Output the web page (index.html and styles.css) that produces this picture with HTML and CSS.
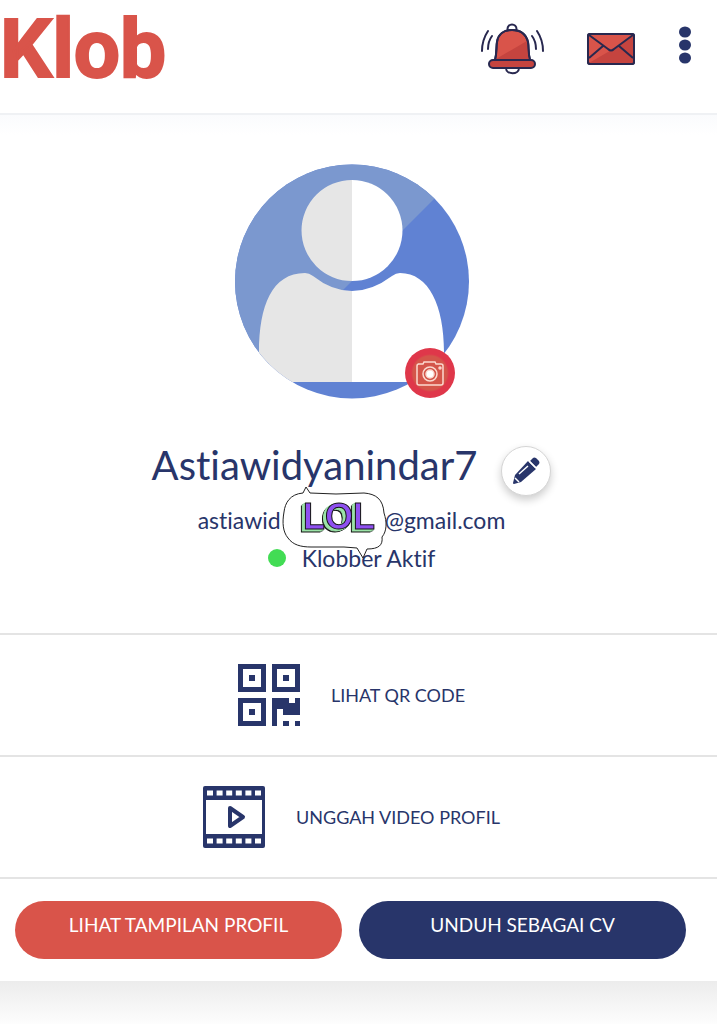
FILE: index.html
```html
<!DOCTYPE html>
<html lang="id">
<head>
  <meta charset="UTF-8" />
  <meta name="viewport" content="width=device-width, initial-scale=1.0"/>
  <title>Klob - Profil</title>
  <link rel="stylesheet" href="styles.css">
</head>
<body>
  <header class="topbar">
    <a href="#" class="logo">Klob</a>
    <nav class="topbar-nav">
      <a href="#" class="nav-bell" aria-label="Notifikasi">
        <svg width="66" height="54" viewBox="0 0 66 54" fill="none" stroke="#28284f" stroke-width="2" stroke-linecap="round" stroke-linejoin="round">
          <circle cx="32" cy="7" r="4.5"/>
          <path d="M26 46c0 7 13 7 13 0"/>
          <path d="M15 38c2-7 1-13 2-18C18 12 24 8 32 8s14 4 16 12c1 6 0 11 2 18z" fill="#d9544a"/>
          <path d="M16 37l31-18c1 7 0 13 2 18z" fill="#c5443f" stroke="none"/>
          <path d="M14 38h37a4 4 0 0 1 0 8H13a4 4 0 0 1 0-8h30" fill="#c5443f"/>
          <path d="M15 38c2-7 1-13 2-18C18 12 24 8 32 8s14 4 16 12c1 6 0 11 2 18"/>
          <path d="M8 9c-4 6-6 12-6 20M12 14c-3 4-4 8-4 13M57 9c4 6 6 12 6 20M52 14c3 4 4 8 4 13"/>
        </svg>
      </a>
      <a href="#" class="nav-mail" aria-label="Pesan">
        <svg width="50" height="34" viewBox="0 0 50 34" fill="none" stroke="#28284f" stroke-width="2" stroke-linejoin="round">
          <rect x="2" y="2" width="46" height="30" rx="2" fill="#d9544a"/>
          <path d="M3 31L34 13 47 4v27z" fill="#c5443f" stroke="none"/>
          <path d="M3 3h44L28 17q-3 3-6 0z" fill="#d9544a" stroke="none"/>
          <rect x="2" y="2" width="46" height="30" rx="2"/>
          <path d="M3 3l19 14q3 3 6 0L47 3M3 26l14-12M47 26L33 14"/>
        </svg>
      </a>
      <button class="nav-more" aria-label="Menu">
        <svg width="14" height="38" viewBox="0 0 14 38" fill="#28356a">
          <ellipse cx="7" cy="6" rx="6" ry="5.500"/>
          <ellipse cx="7" cy="19" rx="6" ry="5.500"/>
          <ellipse cx="7" cy="32" rx="6" ry="5.500"/>
        </svg>
      </button>
    </nav>
  </header>

  <main class="card">
    <section class="profile">
      <div class="avatar">
        <svg width="236" height="236" viewBox="0 0 236 236">
          <defs>
            <clipPath id="round"><circle cx="118" cy="117.500" r="117"/></clipPath>
          </defs>
          <g clip-path="url(#round)">
            <rect width="236" height="236" fill="#6082d3"/>
            <path d="M0 0h236L201 34 0 235z" fill="#7b98cf"/>
            <path d="M25 218v-30c0-46 13-79 46-79q4 0 8 3 19 15 39 15v91z" fill="#e6e6e6"/>
            <path d="M210 218v-30c0-46-15-79-44-79q-4 0-8 3-20 15-40 15v91z" fill="#fff"/>
            <path d="M118 16a50.500 50.500 0 0 0 0 101z" fill="#e6e6e6"/>
            <path d="M118 16a50.500 50.500 0 0 1 0 101z" fill="#fff"/>
          </g>
        </svg>
        <button class="photo-button" aria-label="Ganti foto">
          <svg width="32" height="28" viewBox="0 0 32 28" fill="none" stroke="#fbd9cf" stroke-width="1.500">
            <path d="M4 5h5l1-2h11l1 2h5a2 2 0 0 1 2 2v17a2 2 0 0 1-2 2H5a2 2 0 0 1-2-2V7q0-2 2-2z"/>
            <circle cx="16" cy="15" r="7"/>
            <circle cx="16" cy="15" r="4" fill="#fff"/>
            <circle cx="26" cy="9" r="1"/>
          </svg>
        </button>
      </div>

      <div class="name-row">
        <h1 class="name">Astiawidyanindar7</h1>
        <button class="edit-button" aria-label="Ubah profil">
          <svg width="28" height="28" viewBox="0 0 28 28" fill="#28356a">
            <path d="M18 4l3-3q1-1 3 0l3 3q1 2 0 3l-3 3z"/>
            <path d="M16 4l8 8L9 25l-7 2q-1 0-1-1l2-8z"/>
            <path d="M16 9L7 17M3 21l4 4M17 4l7 7" stroke="#fff" stroke-width="1.500"/>
          </svg>
        </button>
      </div>

      <div class="email">
        <span>astiawid</span>
        <svg class="sticker" width="108" height="76" viewBox="0 0 108 76">
          <path class="bubble" d="M25 2l-3 6C9 9 4 18 3 27c-2 11-1 20 4 26 5 7 13 9 23 9h33l13 1 6 10 4-9c12 0 16-4 15-12 5-6 5-15 2-24C102 14 95 9 83 8L55 9 29 8z"/>
          <text class="lol" x="22" y="44">LOL</text>
        </svg>
        <span>@gmail.com</span>
      </div>
      <p class="status"><span class="dot"></span>Klobber Aktif</p>
    </section>

    <a href="#" class="menu-row">
      <svg width="62" height="62" viewBox="0 0 62 62" fill="#28356a">
        <path fill-rule="evenodd" d="M0 0h28v28H0zM5 5v18h18V5zM11 11h6v6h-6z"/>
        <path fill-rule="evenodd" d="M34 0h28v28H34zM39 5v18h18V5zM45 11h6v6h-6z"/>
        <path fill-rule="evenodd" d="M0 34h28v28H0zM5 39v18h18V39zM11 45h6v6h-6z"/>
        <path d="M34 34h17v5h6v-5h5v17H45v-6h-6v17h-5zM45 57h6v5h-6zM57 57h5v5h-5z"/>
      </svg>
      <span>LIHAT QR CODE</span>
    </a>

    <a href="#" class="menu-row">
      <svg width="62" height="62" viewBox="0 0 62 62" fill="#28356a">
        <rect width="62" height="62" rx="2"/>
        <path d="M3 14h56v34H3z" fill="#fff"/>
        <path d="M4 7h54M4 55h54" stroke="#fff" stroke-width="5" stroke-dasharray="6 3.600"/>
        <path d="M27 22l13 9-13 9z" fill="none" stroke="#28356a" stroke-width="4" stroke-linejoin="round"/>
      </svg>
      <span>UNGGAH VIDEO PROFIL</span>
    </a>

    <div class="actions">
      <button class="pill pill-red">LIHAT TAMPILAN PROFIL</button>
      <button class="pill pill-blue">UNDUH SEBAGAI CV</button>
    </div>
  </main>
  <div class="card-shadow"></div>
</body>
</html>
```

FILE: styles.css
```css
* {
  box-sizing: border-box;
}

body {
  margin: 0;
  background-color: #fff;
  color: #28356a;
  font-family: Lato, sans-serif;
  font-variant-ligatures: none;
}

a {
  color: inherit;
  text-decoration: none;
}

button {
  border: none;
  padding: 0;
  font-family: inherit;
  cursor: pointer;
}

svg {
  display: block;
}

.topbar {
  display: flex;
  justify-content: space-between;
  height: 115px;
  padding-right: 25px;
  border-bottom: 2px solid #eff1f4;
}

.logo {
  color: #d9544a;
  font-family: Roboto, sans-serif;
  font-size: 82px;
  font-weight: bold;
  line-height: 98px;
  -webkit-text-stroke: 2px #d9544a;
}

.topbar-nav {
  display: flex;
  align-items: center;
  height: 98px;
}

.nav-mail {
  margin: 0 42px 0 40px;
}

.nav-more {
  margin-bottom: 8px;
  background: none;
}

.profile {
  display: flex;
  flex-direction: column;
  align-items: center;
  padding: 49px 14px 56px 0;
  background: linear-gradient(#fafbfd, #fff 20px);
}

.avatar {
  position: relative;
}

.photo-button {
  position: absolute;
  right: 15px;
  bottom: 2px;
  display: flex;
  align-items: center;
  justify-content: center;
  width: 50px;
  height: 50px;
  border-radius: 50%;
  background: radial-gradient(#d4554a 17px, #df374a 19px);
}

.name-row {
  display: flex;
  align-items: center;
  gap: 24px;
  margin-top: 41px;
}

.name {
  margin: 0 0 12px;
  font-size: 40px;
  font-weight: normal;
  line-height: 48px;
}

.edit-button {
  display: flex;
  align-items: center;
  justify-content: center;
  width: 50px;
  height: 50px;
  border: 1px solid #d5d5d5;
  border-radius: 50%;
  background-color: #fff;
  box-shadow: 0 4px 8px rgba(0, 0, 0, 0.2);
}

.email {
  display: flex;
  position: relative;
  gap: 104px;
  font-size: 23px;
  line-height: 38px;
}

/* Sticker sits over the middle of the address */
.sticker {
  position: absolute;
  top: -16px;
  left: 83px;
}

.bubble {
  fill: #fff;
  stroke: #222;
  stroke-width: 1;
}

.lol {
  fill: #8f50f0;
  stroke: #111;
  stroke-width: 1;
  font-family: "Liberation Sans", sans-serif;
  font-size: 36px;
  font-weight: bold;
  filter: drop-shadow(-1px 1px 0 #9be3a8) drop-shadow(-2px 1px 0 #9be3a8) drop-shadow(-1px 1px 0 #111);
}

.status {
  display: flex;
  align-items: center;
  gap: 16px;
  margin: 0;
  font-size: 23px;
  line-height: 38px;
}

.dot {
  width: 18px;
  height: 18px;
  border-radius: 50%;
  background-color: #42dc54;
}

.menu-row {
  display: flex;
  align-items: center;
  justify-content: center;
  gap: 31px;
  height: 122px;
  padding-right: 14px;
  border-top: 2px solid #e4e4e4;
  font-size: 18px;
}

.actions {
  display: flex;
  gap: 17px;
  padding: 22px 31px 22px 15px;
  border-top: 2px solid #e4e4e4;
}

.pill {
  flex: 1;
  height: 58px;
  padding-bottom: 12px;
  border-radius: 29px;
  color: #fff;
  font-size: 19px;
}

.pill-red {
  background-color: #d9544a;
}

.pill-blue {
  background-color: #28356a;
}

.card-shadow {
  height: 43px;
  background: linear-gradient(#ececec, #fdfdfd);
}
```
